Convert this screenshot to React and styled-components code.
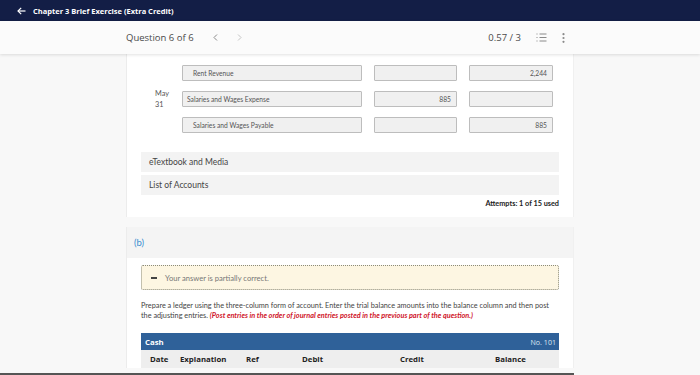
import React from "react";
import styled, { createGlobalStyle } from "styled-components";

const GlobalStyle = createGlobalStyle`
  html, body { margin: 0; padding: 0; }
  body {
    background: #f8f8f8;
    font-family: Lato, "Open Sans", "Liberation Sans", sans-serif;
    color: #333;
  }
`;

const Page = styled.div`
  width: 700px;
  height: 375px;
  display: flex;
  flex-direction: column;
  overflow: hidden;
  background: #f8f8f8;
`;

const TopBar = styled.div`
  height: 21px;
  flex: none;
  box-sizing: border-box;
  background: #131e46;
  display: flex;
  align-items: center;
  padding: 0 0 0 17px;
  color: #fff;
`;

const TopTitle = styled.span`
  margin-left: 7px;
  font-family: "Open Sans", sans-serif;
  font-weight: 700;
  font-size: 7.5px;
`;

const SubHeader = styled.div`
  height: 33px;
  flex: none;
  background: #fbfbfb;
  box-shadow: 0 1px 3px rgba(0, 0, 0, 0.12);
  display: flex;
  align-items: center;
  padding: 0 0 0 126px;
  position: relative;
  z-index: 1;
  font-family: "Open Sans", sans-serif;
  font-size: 9.5px;
  color: #4a4a4a;
`;

const QLabel = styled.span`
  margin-right: 17px;
`;

const NavBtn = styled.span`
  display: inline-flex;
  width: 10px;
  justify-content: center;
  margin-right: 14px;
  color: ${(p) => (p.$disabled ? "#c4c4c4" : "#8a8a8a")};
`;

const Score = styled.span`
  margin-left: auto;
  margin-right: 15px;
`;

const IconBtn = styled.span`
  display: inline-flex;
  align-items: center;
  margin-right: ${(p) => p.$mr || 0}px;
  color: #8a8a8a;
`;

const Main = styled.div`
  flex: 1;
  overflow: hidden;
  display: flex;
  flex-direction: column;
  gap: 10px;
  padding-left: 126px;
  width: 448px;
  border-bottom: 2px solid #555;
`;

const Card = styled.div`
  background: #fff;
  border-left: 1px solid #ececec;
  border-right: 1px solid #f0f0f0;
  display: flex;
  flex-direction: column;
`;

const JournalCard = styled(Card)`
  padding: 11px 14px 9px 14px;
`;

const Journal = styled.div`
  display: grid;
  grid-template-columns: 41px 180px 95px 96px;
  grid-auto-rows: 16px;
  row-gap: 10px;
`;

const DateCell = styled.div`
  font-size: 7.3px;
  line-height: 11px;
  color: #555;
  display: flex;
  flex-direction: column;
  justify-content: center;
  white-space: nowrap;
`;

const DateText = styled.span`
  margin-left: 14px;
`;

const Field = styled.div`
  height: 16px;
  box-sizing: border-box;
  margin-left: ${(p) => (p.$num ? 12 : 0)}px;
  background: #f0f0f0;
  border: 1px solid #bdbdbd;
  border-radius: 1px;
  display: flex;
  align-items: center;
  justify-content: ${(p) => (p.$num ? "flex-end" : "flex-start")};
  padding: 0 ${(p) => (p.$num ? 5 : 4)}px 0 ${(p) => (p.$indent ? 10 : 4)}px;
  font-size: 6.7px;
  color: #555;
  white-space: nowrap;
`;

const LinkBar = styled.div`
  margin-top: ${(p) => p.$mt || 0}px;
  height: 20px;
  background: #f3f3f3;
  display: flex;
  align-items: center;
  padding: 0 0 0 8px;
  font-size: 8.5px;
  color: #444;
`;

const Attempts = styled.div`
  margin-top: 4px;
  text-align: right;
  font-size: 7.3px;
  font-weight: 700;
  color: #222;
`;

const PartHeader = styled.div`
  height: 31px;
  background: #f4f4f4;
  display: flex;
  align-items: center;
  padding: 0 0 0 7px;
  font-size: 9.5px;
  color: #3d8fd1;
`;

const PartBody = styled.div`
  padding: 7px 14px 0 14px;
  display: flex;
  flex-direction: column;
`;

const Banner = styled.div`
  height: 25px;
  box-sizing: border-box;
  background: #fdf6e2;
  border: 1px dotted #8a8a7a;
  border-radius: 2px;
  display: flex;
  align-items: center;
  padding: 0 0 0 9px;
  gap: 8px;
  font-size: 7.6px;
  color: #777;
`;

const Dash = styled.span`
  width: 6px;
  height: 2px;
  background: #444;
  display: inline-block;
`;

const Instructions = styled.p`
  margin: 11px 0 0 0;
  font-size: 7.3px;
  line-height: 10px;
  color: #444;
`;

const Emph = styled.em`
  color: #d0152a;
  font-weight: 700;
`;

const LedgerHead = styled.div`
  margin-top: 12px;
  height: 17px;
  background: #2f6199;
  color: #fff;
  display: flex;
  align-items: center;
  justify-content: space-between;
  padding: 0 3px 0 4px;
  font-family: "Open Sans", sans-serif;
`;

const LedgerName = styled.span`
  font-weight: 700;
  font-size: 7.8px;
`;

const LedgerNo = styled.span`
  color: #dbe6f3;
  font-size: 7.1px;
`;

const ColRow = styled.div`
  height: 18px;
  background: #eeeeee;
  display: grid;
  grid-template-columns: 30px 66px 56px 98px 95px 1fr;
  align-items: center;
  font-family: "Open Sans", sans-serif;
  font-size: 7.8px;
  font-weight: 700;
  color: #222;
  padding: 0 0 0 9px;
`;

const ListIcon = () => (
  <svg width="11" height="9" viewBox="0 0 11 9" fill="none" stroke="currentColor" strokeWidth="1">
    <line x1="1" y1="0.5" x2="1" y2="1.5" />
    <line x1="1" y1="4" x2="1" y2="5" />
    <line x1="1" y1="7.5" x2="1" y2="8.5" />
    <line x1="3.5" y1="1" x2="10.5" y2="1" />
    <line x1="3.5" y1="4.5" x2="10.5" y2="4.5" />
    <line x1="3.5" y1="8" x2="10.5" y2="8" />
  </svg>
);

const KebabIcon = () => (
  <svg width="3" height="10" viewBox="0 0 3 10" fill="currentColor">
    <circle cx="1.5" cy="1.2" r="1.1" />
    <circle cx="1.5" cy="5" r="1.1" />
    <circle cx="1.5" cy="8.8" r="1.1" />
  </svg>
);

const Chevron = ({ dir }) => (
  <svg width="5" height="7" viewBox="0 0 5 7" fill="none" stroke="currentColor" strokeWidth="1">
    {dir === "left" ? <polyline points="4,0.5 1,3.5 4,6.5" /> : <polyline points="1,0.5 4,3.5 1,6.5" />}
  </svg>
);

const BackArrow = () => (
  <svg width="9" height="8" viewBox="0 0 9 8" fill="none" stroke="#fff" strokeWidth="1.2">
    <line x1="1" y1="4" x2="8.5" y2="4" />
    <polyline points="4.2,0.8 1,4 4.2,7.2" />
  </svg>
);

const rows = [
  { acct: "Rent Revenue", indent: true, debit: "", credit: "2,244" },
  { acct: "Salaries and Wages Expense", indent: false, debit: "885", credit: "" },
  { acct: "Salaries and Wages Payable", indent: true, debit: "", credit: "885" },
];

export default function App() {
  return (
    <Page>
      <GlobalStyle />
      <TopBar>
        <BackArrow />
        <TopTitle>Chapter 3 Brief Exercise (Extra Credit)</TopTitle>
      </TopBar>
      <SubHeader>
        <QLabel>Question 6 of 6</QLabel>
        <NavBtn><Chevron dir="left" /></NavBtn>
        <NavBtn $disabled><Chevron dir="right" /></NavBtn>
        <Score>0.57 / 3</Score>
        <IconBtn $mr={15}><ListIcon /></IconBtn>
        <IconBtn $mr={135}><KebabIcon /></IconBtn>
      </SubHeader>
      <Main>
        <JournalCard>
          <Journal>
            {rows.map((r, i) => (
              <React.Fragment key={i}>
                <DateCell>
                  {i === 1 ? (
                    <>
                      <DateText>May</DateText>
                      <DateText>31</DateText>
                    </>
                  ) : null}
                </DateCell>
                <Field $indent={r.indent}>{r.acct}</Field>
                <Field $num>{r.debit}</Field>
                <Field $num>{r.credit}</Field>
              </React.Fragment>
            ))}
          </Journal>
          <LinkBar $mt={19}>eTextbook and Media</LinkBar>
          <LinkBar $mt={3}>List of Accounts</LinkBar>
          <Attempts>Attempts: 1 of 15 used</Attempts>
        </JournalCard>
        <Card>
          <PartHeader>(b)</PartHeader>
          <PartBody>
            <Banner>
              <Dash />
              <span>Your answer is partially correct.</span>
            </Banner>
            <Instructions>
              Prepare a ledger using the three-column form of account. Enter the trial balance amounts into the balance column and then post
              the adjusting entries. <Emph>(Post entries in the order of journal entries posted in the previous part of the question.)</Emph>
            </Instructions>
            <LedgerHead>
              <LedgerName>Cash</LedgerName>
              <LedgerNo>No. 101</LedgerNo>
            </LedgerHead>
            <ColRow>
              <span>Date</span>
              <span>Explanation</span>
              <span>Ref</span>
              <span>Debit</span>
              <span>Credit</span>
              <span>Balance</span>
            </ColRow>
          </PartBody>
        </Card>
      </Main>
    </Page>
  );
}
